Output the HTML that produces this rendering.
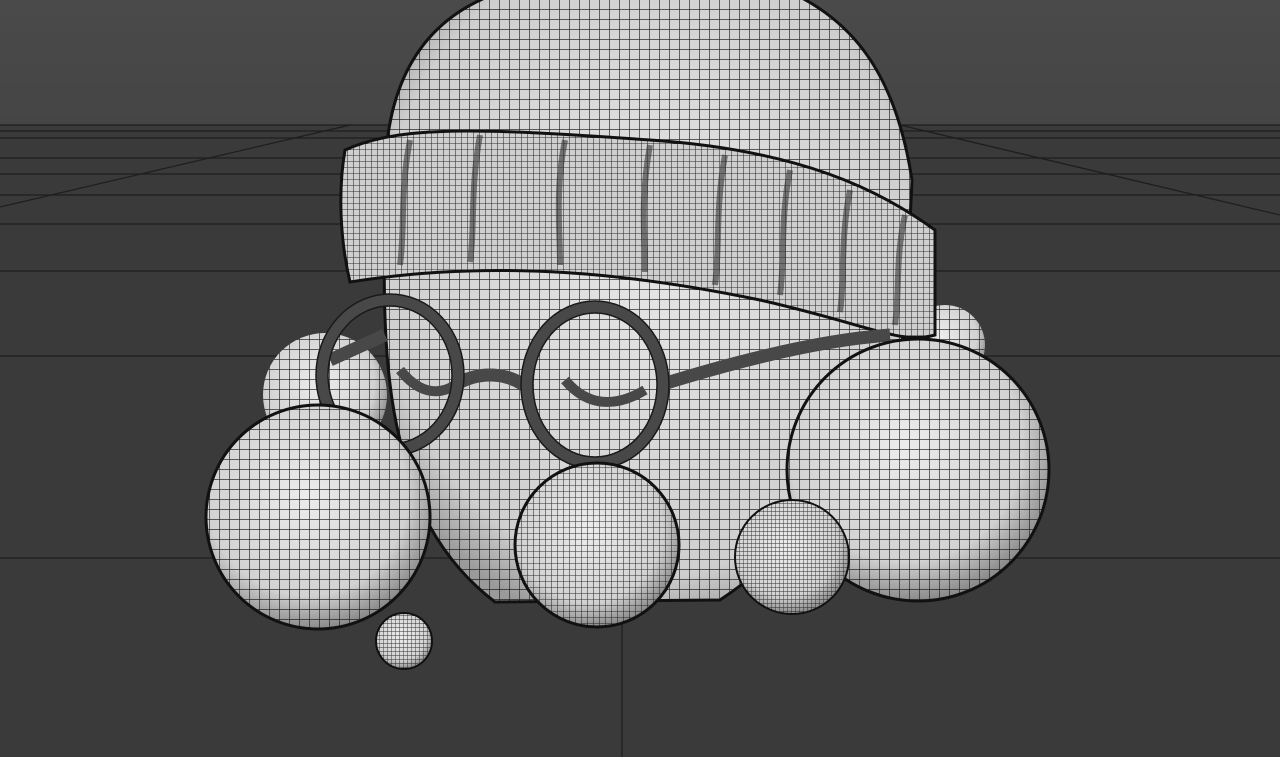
<!DOCTYPE html><html><head><style>html,body{margin:0;padding:0;background:#3a3a3a}svg{display:block}</style></head><body>
<svg width="1280" height="757" viewBox="0 0 1280 757" xmlns="http://www.w3.org/2000/svg">
<defs>
<linearGradient id="sky" x1="0" y1="0" x2="0" y2="1"><stop offset="0" stop-color="#4a4a4a"/><stop offset="1" stop-color="#454545"/></linearGradient>
<radialGradient id="sph" cx="0.45" cy="0.4" r="0.6"><stop offset="0" stop-color="#ececec"/><stop offset="0.75" stop-color="#d2d2d2"/><stop offset="1" stop-color="#8a8a8a"/></radialGradient>
<radialGradient id="head" cx="0.5" cy="0.45" r="0.6"><stop offset="0" stop-color="#e6e6e6"/><stop offset="0.85" stop-color="#cfcfcf"/><stop offset="1" stop-color="#9a9a9a"/></radialGradient>
<pattern id="g10" width="10" height="10" patternUnits="userSpaceOnUse"><path d="M10 0V10M0 10H10" stroke="#111" stroke-width="1.4" fill="none" opacity="0.85"/></pattern>
<pattern id="g6" width="6" height="6" patternUnits="userSpaceOnUse"><path d="M6 0V6M0 6H6" stroke="#111" stroke-width="1.1" fill="none" opacity="0.85"/></pattern>
<pattern id="g4" width="4" height="4" patternUnits="userSpaceOnUse"><path d="M4 0V4M0 4H4" stroke="#111" stroke-width="0.9" fill="none" opacity="0.85"/></pattern>
</defs>
<rect width="1280" height="125" fill="url(#sky)"/>
<rect y="125" width="1280" height="632" fill="#3a3a3a"/>
<g stroke="#1e1e1e" stroke-width="1.3">
<line x1="0" y1="125" x2="1280" y2="125"/><line x1="0" y1="131" x2="1280" y2="131"/><line x1="0" y1="138" x2="1280" y2="138"/>
<line x1="0" y1="158" x2="1280" y2="158"/><line x1="0" y1="174" x2="1280" y2="174"/><line x1="0" y1="195" x2="1280" y2="195"/>
<line x1="0" y1="224" x2="1280" y2="224"/><line x1="0" y1="271" x2="1280" y2="271"/><line x1="0" y1="356" x2="1280" y2="356"/>
<line x1="0" y1="558" x2="1280" y2="558"/><line x1="622" y1="560" x2="622" y2="757"/>
<line x1="0" y1="207" x2="350" y2="125"/><line x1="1280" y1="215" x2="900" y2="125"/>
</g>
<circle cx="325" cy="395" r="62" fill="url(#sph)"/><circle cx="325" cy="395" r="62" fill="url(#g10)"/>
<circle cx="945" cy="345" r="40" fill="url(#sph)"/><circle cx="945" cy="345" r="40" fill="url(#g10)"/>
<path d="M388 135 C400 50 450 -10 560 -20 L760 -20 C850 10 895 70 912 180 L905 330 C880 420 840 520 720 600 L495 602 C440 560 410 500 400 440 C385 380 380 300 388 135Z" fill="url(#head)" stroke="#111" stroke-width="3"/>
<path d="M388 135 C400 50 450 -10 560 -20 L760 -20 C850 10 895 70 912 180 L905 330 C880 420 840 520 720 600 L495 602 C440 560 410 500 400 440 C385 380 380 300 388 135Z" fill="url(#g10)"/>
<path d="M345 150 C400 125 480 128 650 140 C800 150 880 190 935 230 L935 335 C900 345 870 325 760 300 C640 275 500 258 350 282 C340 240 338 190 345 150Z" fill="#cfcfcf" stroke="#111" stroke-width="3"/>
<path d="M345 150 C400 125 480 128 650 140 C800 150 880 190 935 230 L935 335 C900 345 870 325 760 300 C640 275 500 258 350 282 C340 240 338 190 345 150Z" fill="url(#g6)"/>
<g stroke="#333" stroke-width="6" fill="none" opacity="0.6">
<path d="M410 140 C400 190 405 230 400 265"/><path d="M480 135 C470 190 475 230 470 262"/><path d="M565 140 C555 190 560 230 560 265"/><path d="M650 145 C640 200 645 240 645 272"/><path d="M725 155 C715 210 720 250 715 285"/><path d="M790 170 C780 220 785 260 780 295"/><path d="M850 190 C840 240 845 280 840 312"/><path d="M905 215 C895 260 900 290 895 325"/>
</g>
<g fill="none" stroke="#484848" stroke-width="13">
<ellipse cx="390" cy="375" rx="68" ry="75"/>
<ellipse cx="595" cy="385" rx="68" ry="78"/>
<path d="M455 385 C480 370 510 372 530 390"/>
<path d="M660 385 C740 360 820 340 890 335"/>
<path d="M330 360 L385 335"/>
<path d="M400 370 C420 395 440 395 455 385" stroke-width="10"/>
<path d="M565 380 C590 410 620 405 645 390" stroke-width="10"/>
</g>
<g fill="none" stroke="#1a1a1a" stroke-width="1.5">
<ellipse cx="390" cy="375" rx="74" ry="81"/><ellipse cx="390" cy="375" rx="62" ry="69"/>
<ellipse cx="595" cy="385" rx="74" ry="84"/><ellipse cx="595" cy="385" rx="62" ry="72"/>
</g>
<circle cx="318" cy="517" r="112" fill="url(#sph)" stroke="#111" stroke-width="3"/><circle cx="318" cy="517" r="112" fill="url(#g10)"/>
<circle cx="918" cy="470" r="131" fill="url(#sph)" stroke="#111" stroke-width="3"/><circle cx="918" cy="470" r="131" fill="url(#g10)"/>
<circle cx="597" cy="545" r="82" fill="url(#sph)" stroke="#111" stroke-width="3"/><circle cx="597" cy="545" r="82" fill="url(#g6)"/>
<circle cx="792" cy="557" r="57" fill="url(#sph)" stroke="#111" stroke-width="2"/><circle cx="792" cy="557" r="57" fill="url(#g4)"/>
<circle cx="404" cy="641" r="28" fill="url(#sph)" stroke="#111" stroke-width="2"/><circle cx="404" cy="641" r="28" fill="url(#g4)"/>
</svg>
</body></html>
